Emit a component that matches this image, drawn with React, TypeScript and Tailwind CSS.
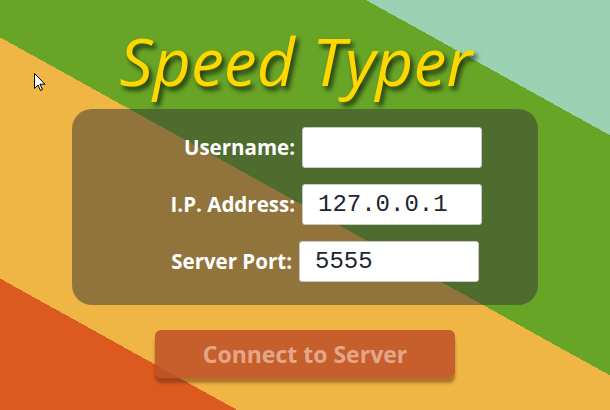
import React from "react";

const Field = ({
  label,
  value,
  shift = false,
}: {
  label: string;
  value: string;
  shift?: boolean;
}) => (
  <div className={shift ? "flex items-center justify-end gap-[7px] pr-[59px]" : "flex items-center justify-end gap-[7px] pr-[56px]"}>
    <label className="text-[20.5px] font-bold text-white">{label}</label>
    <input
      readOnly
      value={value}
      className="h-[41px] w-[180px] rounded-[3px] border border-[#c8c8c8] bg-white px-[15px] font-['Liberation_Mono',monospace] text-[24px] text-[#1d2533] outline-none"
    />
  </div>
);

const Cursor = () => (
  <svg className="absolute left-[34px] top-[73px]" width="12" height="19" viewBox="0 0 12 19">
    <path d="M0.5 0.5 L0.5 15.5 L4 12 L6.5 17.5 L8.5 16.5 L6 11.2 L11 11.2 Z" fill="#fff" stroke="#000" strokeWidth="1" />
  </svg>
);

export default function App() {
  return (
    <div className="relative flex h-[410px] w-[610px] flex-col items-center overflow-hidden bg-[linear-gradient(29deg,#dc5a20_115px,#efb545_115px_326px,#68a527_326px_536px,#9cd2b4_536px)] font-['Open_Sans',sans-serif]">
      <Cursor />
      <h1 className="mt-[15px] h-[90px] pr-[18px] text-[66px] leading-[90px] italic text-[#ffd700] [text-shadow:3px_4px_5px_rgba(0,0,0,0.7)]">
        Speed Typer
      </h1>
      <div className="mt-[4px] flex h-[196px] w-[466px] flex-col gap-[16px] rounded-[20px] bg-[rgba(51,51,51,0.5)] pt-[18px]">
        <Field label="Username:" value="" />
        <Field label="I.P. Address:" value="127.0.0.1" />
        <Field label="Server Port:" value="5555" shift />
      </div>
      <button className="mt-[25px] h-[48px] w-[300px] rounded-[6px] bg-[rgba(190,80,40,0.85)] text-[23px] font-bold text-[rgba(255,230,220,0.55)] shadow-[0_5px_3px_rgba(90,40,10,0.45)]">
        Connect to Server
      </button>
    </div>
  );
}
